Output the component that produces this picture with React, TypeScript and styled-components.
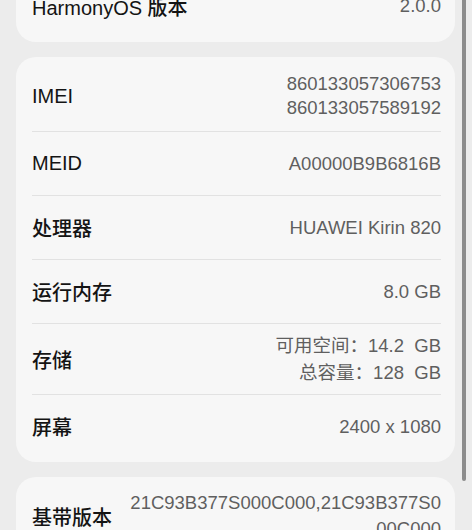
import React from 'react'
import styled, { createGlobalStyle } from 'styled-components'

const GlobalStyle = createGlobalStyle`
  html, body {
    margin: 0;
    padding: 0;
    background: #ececec;
  }
  body {
    font-family: "Liberation Sans", "Noto Sans CJK SC", sans-serif;
    -webkit-font-smoothing: antialiased;
  }
`

const Screen = styled.div`
  position: relative;
  width: 472px;
  height: 530px;
  overflow: hidden;
  background: #ececec;
`

const Column = styled.div`
  display: flex;
  flex-direction: column;
  gap: 15px;
  margin-top: -30px;
  padding: 0 17px 0 16px;
`

const Card = styled.section`
  background: #f7f7f7;
  border-radius: 20px;
  padding: 4px 14px 4px 16px;
`

const Row = styled.div<{ $pad?: number }>`
  display: flex;
  align-items: center;
  justify-content: space-between;
  gap: 16px;
  min-height: 64px;
  box-sizing: border-box;
  padding: ${(p) => p.$pad ?? 0}px 0;

  & + & {
    border-top: 1px solid #e2e2e2;
  }
`

const Label = styled.div`
  flex: none;
  font-size: 20px;
  font-weight: 500;
  color: #141414;
  white-space: nowrap;
`

const Value = styled.div<{ $lh?: number }>`
  flex: 1;
  min-width: 0;
  text-align: right;
  font-size: 18.5px;
  line-height: ${(p) => p.$lh ?? 26}px;
  color: #5f5f5f;
  word-break: break-all;
`

const ScrollThumb = styled.div`
  position: absolute;
  top: 0;
  right: 6px;
  width: 4px;
  height: 481px;
  border-radius: 0 0 2px 2px;
  background: #8c8c8c;
`

type Item = { label: string; lines: string[]; lh?: number; pad?: number }

const hardware: Item[] = [
  { label: 'IMEI', lines: ['860133057306753', '860133057589192'], lh: 24, pad: 11 },
  { label: 'MEID', lines: ['A00000B9B6816B'] },
  { label: '处理器', lines: ['HUAWEI Kirin 820'] },
  { label: '运行内存', lines: ['8.0 GB'] },
  { label: '存储', lines: ['可用空间：14.2  GB', '总容量：128  GB'], lh: 27, pad: 8 },
  { label: '屏幕', lines: ['2400 x 1080'] },
]

const InfoRow = ({ label, lines, lh, pad }: Item) => (
  <Row $pad={pad}>
    <Label>{label}</Label>
    <Value $lh={lh}>
      {lines.map((l) => (
        <div key={l} style={{ whiteSpace: 'pre' }}>
          {l}
        </div>
      ))}
    </Value>
  </Row>
)

export default function App() {
  return (
    <Screen>
      <GlobalStyle />
      <Column>
        <Card>
          <InfoRow label="HarmonyOS 版本" lines={['2.0.0']} />
        </Card>
        <Card>
          {hardware.map((it) => (
            <InfoRow key={it.label} {...it} />
          ))}
        </Card>
        <Card>
          <Row $pad={9}>
            <Label>基带版本</Label>
            <Value>21C93B377S000C000,21C93B377S000C000</Value>
          </Row>
        </Card>
      </Column>
      <ScrollThumb />
    </Screen>
  )
}
